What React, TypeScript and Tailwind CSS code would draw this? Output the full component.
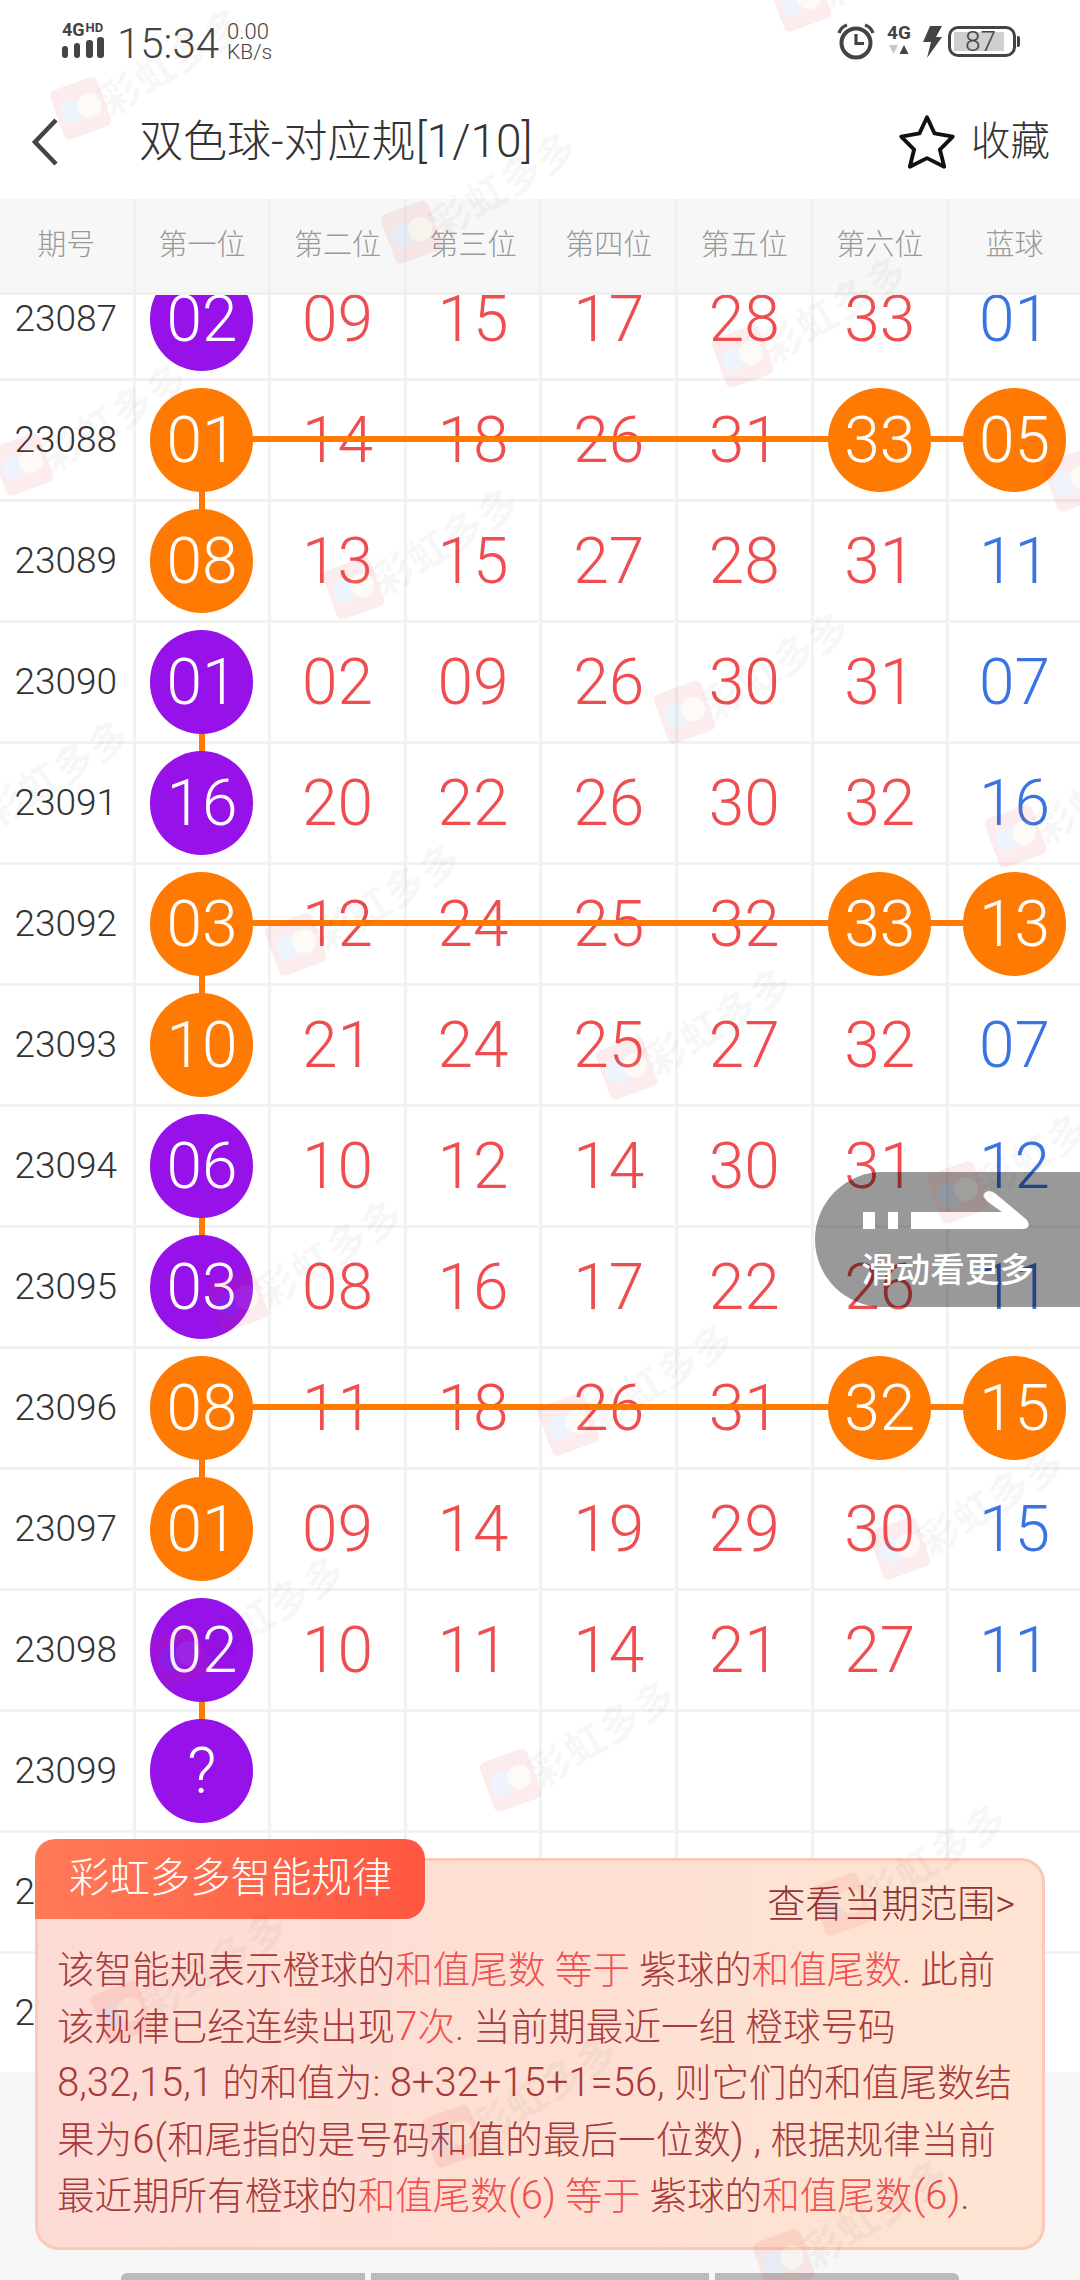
import React from "react";

type Row = { id: string; n: string[]; c: "p" | "o"; line?: boolean; link?: boolean };

const rows: Row[] = [
  { id: "23087", n: ["02", "09", "15", "17", "28", "33", "01"], c: "p" },
  { id: "23088", n: ["01", "14", "18", "26", "31", "33", "05"], c: "o", line: true, link: true },
  { id: "23089", n: ["08", "13", "15", "27", "28", "31", "11"], c: "o" },
  { id: "23090", n: ["01", "02", "09", "26", "30", "31", "07"], c: "p", link: true },
  { id: "23091", n: ["16", "20", "22", "26", "30", "32", "16"], c: "p" },
  { id: "23092", n: ["03", "12", "24", "25", "32", "33", "13"], c: "o", line: true, link: true },
  { id: "23093", n: ["10", "21", "24", "25", "27", "32", "07"], c: "o" },
  { id: "23094", n: ["06", "10", "12", "14", "30", "31", "12"], c: "p", link: true },
  { id: "23095", n: ["03", "08", "16", "17", "22", "26", "11"], c: "p" },
  { id: "23096", n: ["08", "11", "18", "26", "31", "32", "15"], c: "o", line: true, link: true },
  { id: "23097", n: ["01", "09", "14", "19", "29", "30", "15"], c: "o" },
  { id: "23098", n: ["02", "10", "11", "14", "21", "27", "11"], c: "p", link: true },
  { id: "23099", n: ["?", "", "", "", "", "", ""], c: "p" },
  { id: "23100", n: ["", "", "", "", "", "", ""], c: "p" },
  { id: "23101", n: ["", "", "", "", "", "", ""], c: "p" },
];

const heads = ["期号", "第一位", "第二位", "第三位", "第四位", "第五位", "第六位", "蓝球"];

const marks: { x: number; y: number }[] = [];
for (let i = -4; i <= 6; i++) {
  for (let j = -3; j <= 6; j++) {
    const x = 355 + i * 331 + j * -58;
    const y = 592 + i * 124 + j * 356;
    if (x > -60 && x < 1140 && y > -40 && y < 2340) marks.push({ x, y });
  }
}

function Watermark({ x, y }: { x: number; y: number }) {
  return (
    <div className="absolute" style={{ left: x, top: y }}>
      <svg width="70" height="80" viewBox="0 0 70 80" className="absolute left-[-35px] top-[-40px] opacity-[0.09]">
        <g transform="rotate(-20 35 40)">
          <rect x="10" y="10" width="50" height="52" rx="6" fill="#f0393f" />
          <circle cx="26" cy="36" r="12" fill="#3f8cf0" />
          <circle cx="44" cy="36" r="12" fill="#f7d9a0" />
        </g>
      </svg>
      <span className="absolute left-[22px] top-[-36px] origin-left rotate-[-32deg] whitespace-nowrap text-[40px] leading-[60px] font-bold tracking-[1px] text-black/[0.05]">
        彩虹多多
      </span>
    </div>
  );
}

function Ball({ v, c }: { v: string; c: "p" | "o" }) {
  return (
    <div
      className={`relative z-20 flex h-[104px] w-[103px] items-center justify-center rounded-full pt-[2px] text-[64px] font-light text-white ${
        c === "p" ? "bg-[#9612e8]" : "bg-[#ff7a03]"
      }`}
    >
      {v}
    </div>
  );
}

function TableRow({ r }: { r: Row }) {
  return (
    <div className="relative grid h-[121px] grid-cols-[repeat(7,135.6px)_1fr] border-b-[3px] border-[#f2f2f2]">
      {r.line && <div className="absolute left-[202px] right-[66px] top-[55px] z-10 h-[6px] bg-[#ff7a03]" />}
      <div className="flex items-center justify-center border-r-[3px] border-[#f2f2f2] pr-[1px] text-[37px] font-light text-[#333333]">
        {r.id}
      </div>
      {r.n.map((v, i) => {
        const isBall = i === 0 && v !== "" ? true : !!r.line && i >= 5;
        return (
          <div
            key={i}
            className={`relative flex items-center justify-center ${i < 6 ? "border-r-[3px] border-[#f2f2f2]" : ""}`}
          >
            {isBall ? (
              <Ball v={v} c={r.line ? "o" : r.c} />
            ) : (
              <span className={`pt-[2px] text-[64px] font-light ${i === 6 ? "text-[#3a74e4]" : "text-[#ef4d4f]"}`}>{v}</span>
            )}
            {i === 0 && r.link && (
              <div className="absolute left-1/2 top-[100px] z-10 ml-[-3px] h-[40px] w-[6px] bg-[#ff7a03]" />
            )}
          </div>
        );
      })}
    </div>
  );
}

function L({ children }: { children: React.ReactNode }) {
  return <span className="text-[40px]">{children}</span>;
}

export default function App() {
  const hot = "text-[#f0504e]";
  return (
    <div className="relative flex h-[2280px] w-[1080px] flex-col overflow-hidden bg-white text-[#333333] [font-family:Roboto,'Noto_Sans_CJK_SC',sans-serif]">
      {/* status bar */}
      <div className="flex h-[80px] shrink-0 items-start justify-between pl-[62px] pr-[60px] pt-[23px] text-[#444444]">
        <div className="flex items-start">
          <div className="flex w-[44px] flex-col">
            <div className="flex h-[14px] items-start font-bold leading-none">
              <span className="text-[18px] leading-[14px]">4G</span>
              <span className="ml-[1px] text-[13px] leading-[10px]">HD</span>
            </div>
            <svg width="42" height="21" viewBox="0 0 42 21">
              <rect x="0" y="9" width="6" height="12" rx="3" fill="#444" />
              <rect x="12" y="6" width="6" height="15" rx="3" fill="#444" />
              <rect x="24" y="3" width="7" height="18" rx="3" fill="#444" />
              <rect x="35" y="0" width="7" height="21" rx="3" fill="#444" />
            </svg>
          </div>
          <span className="ml-[11px] mt-[-1px] text-[42px] leading-[44px] font-light">15:34</span>
          <div className="ml-[8px] mt-[-1px] flex flex-col text-[22px] leading-[20px] font-light">
            <span>0.00</span>
            <span className="text-[21px]">KB/s</span>
          </div>
        </div>
        <div className="flex items-start">
          <svg width="40" height="40" viewBox="0 0 40 40">
            <circle cx="20" cy="20" r="14.5" fill="none" stroke="#444" strokeWidth="4" />
            <path d="M20 11v9.5h8" fill="none" stroke="#444" strokeWidth="3.2" />
            <path d="M3 10 Q5 4 11 2 M37 10 Q35 4 29 2" fill="none" stroke="#444" strokeWidth="3.4" />
          </svg>
          <div className="ml-[10px] mt-[2px] flex w-[26px] flex-col items-center">
            <span className="text-[19px] leading-[16px] font-bold">4G</span>
            <svg width="20" height="11" viewBox="0 0 20 11" className="mt-[3px]">
              <path d="M0 1h9l-4.5 9z" fill="#c8c8c8" />
              <path d="M10.5 10h9L15 1z" fill="#444" />
            </svg>
          </div>
          <svg width="20" height="32" viewBox="0 0 20 32" className="ml-[11px] mt-[3px]">
            <path d="M7 0h12l-6 11h6L4 32l4-16H0z" fill="#444" />
          </svg>
          <div className="ml-[5px] mt-[3px] flex h-[31px] w-[68px] items-center rounded-[10px] border-[3px] border-[#444] px-[3px]">
            <div className="flex h-[19px] w-[50px] items-center justify-center bg-[#cfcfcf] pl-[3px] text-[28px] font-light leading-none">
              87
            </div>
          </div>
          <div className="ml-[1px] mt-[13px] h-[11px] w-[3px] rounded-r-[2px] bg-[#444]" />
        </div>
      </div>

      {/* nav */}
      <div className="flex h-[119px] shrink-0 items-center pt-[4px]">
        <svg width="30" height="50" viewBox="0 0 30 50" className="ml-[30px]">
          <path d="M26 3 L5 25 L26 47" fill="none" stroke="#444" strokeWidth="4.5" />
        </svg>
        <span className="ml-[79px] text-[44px] font-light text-[#333333]">
          双色球-对应规<span className="text-[46px]">[1/10]</span>
        </span>
        <div className="ml-auto flex items-center pr-[30px]">
          <svg width="58" height="56" viewBox="0 0 54 52">
            <path
              d="M27 3 L34 18 L51 21 L39 33 L43 49 L27 41 L11 49 L15 33 L3 21 L20 18 Z"
              fill="none"
              stroke="#111"
              strokeWidth="3.6"
              strokeLinejoin="round"
            />
          </svg>
          <span className="ml-[15px] text-[39.5px] font-light text-[#333333]">收藏</span>
        </div>
      </div>

      {/* table head */}
      <div className="grid h-[96px] shrink-0 grid-cols-[repeat(7,135.6px)_1fr] border-b-[3px] border-[#f0f0f0] bg-[#f7f7f7]">
        {heads.map((h, i) => (
          <div
            key={h}
            className={`flex items-center justify-center text-[29px] font-light text-[#999999] ${
              i < 7 ? "border-r-[3px] border-[#f1f1f1]" : ""
            }`}
          >
            {h}
          </div>
        ))}
      </div>

      {/* table body */}
      <div className="min-h-0 flex-1 overflow-hidden">
        <div className="relative mt-[-35px]">
          {rows.map((r) => (
            <TableRow key={r.id} r={r} />
          ))}
        </div>
      </div>

      {/* footer */}
      <div className="flex h-[208px] shrink-0 gap-[6px] bg-[#f7f7f7] pl-[121px] pt-[201px]">
        <div className="h-[7px] w-[244px] rounded-tl-[6px] bg-[#bbbbbb]" />
        <div className="h-[7px] w-[338px] bg-[#bbbbbb]" />
        <div className="h-[7px] w-[244px] rounded-tr-[6px] bg-[#bbbbbb]" />
      </div>

      {/* swipe hint */}
      <div className="absolute left-[815px] top-[1172px] z-30 flex h-[135px] w-[265px] flex-col rounded-l-[68px] bg-black/40 pl-[47px] pt-[14px]">
        <svg width="170" height="60" viewBox="0 0 170 60">
          <rect x="1" y="26" width="12" height="17" fill="#fff" />
          <rect x="26" y="26" width="10" height="17" fill="#fff" />
          <path d="M49 26 H140 L126 16 Q118 9 124 6 Q128 3 134 8 L165 34 Q170 43 160 43 H49 Z" fill="#fff" />
        </svg>
        <span className="ml-[-1px] mt-[2px] text-[34.6px] leading-[44px] font-medium whitespace-nowrap text-white">滑动看更多</span>
      </div>

      {/* rule card */}
      <div className="absolute left-[35px] top-[1858px] z-30 h-[392px] w-[1010px] rounded-[24px] border-[3px] border-[#fcc8b8] bg-gradient-to-r from-[#fddbd5] to-[#fee4d2] text-[37.6px] leading-[56.5px] font-light whitespace-nowrap text-[#a93a3a]">
        <div className="absolute left-[-3px] top-[-22px] flex h-[80px] w-[390px] items-center rounded-t-[20px] rounded-br-[20px] bg-gradient-to-r from-[#ff7a58] to-[#ff5640] pl-[34px] text-[40.4px] font-light text-white">
          彩虹多多智能规律
        </div>
        <div className="flex h-[68px] items-end justify-end pr-[27px] text-[38px] leading-[50px] text-[#8f3434]">
          查看当期范围&gt;
        </div>
        <div className="pl-[19px] pt-[13px]">
          <div>
            该智能规表示橙球的<span className={hot}>和值尾数 等于</span> 紫球的<span className={hot}>和值尾数</span>. 此前
          </div>
          <div>
            该规律已经连续出现<span className={hot}><L>7</L>次</span>. 当前期最近一组 橙球号码
          </div>
          <div>
            <L>8,32,15,1</L> 的和值为: <L>8+32+15+1=56,</L> 则它们的和值尾数结
          </div>
          <div>
            果为<L>6(</L>和尾指的是号码和值的最后一位数<L>) ,</L> 根据规律当前
          </div>
          <div>
            最近期所有橙球的<span className={hot}>和值尾数<L>(6)</L> 等于</span> 紫球的<span className={hot}>和值尾数<L>(6)</L></span>.
          </div>
        </div>
      </div>

      {/* watermarks */}
      <div className="pointer-events-none absolute inset-0 z-40 overflow-hidden">
        {marks.map((m, i) => (
          <Watermark key={i} x={m.x} y={m.y} />
        ))}
      </div>
    </div>
  );
}
